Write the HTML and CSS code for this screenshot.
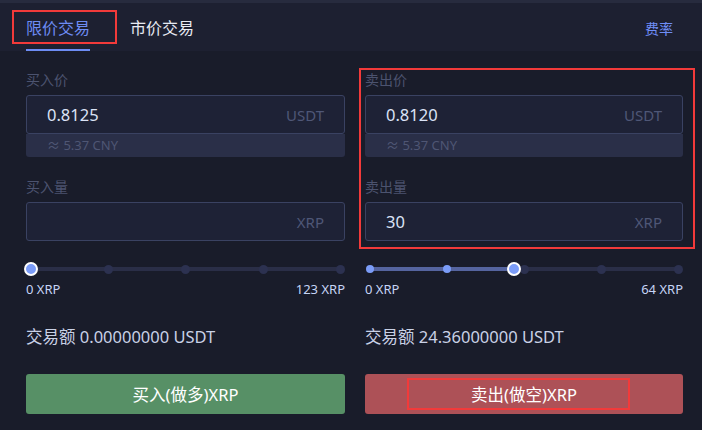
FILE: index.html
```html
<!DOCTYPE html>
<html lang="zh-CN">
<head>
<meta charset="utf-8">
<title>限价交易</title>
<link rel="stylesheet" href="styles.css">
</head>
<body>
<div class="topstrip"></div>
<header class="header">
  <nav class="tabs">
    <span class="tab active">限价交易<i class="mark mark-tab"></i></span>
    <span class="tab">市价交易</span>
  </nav>
  <a class="fee">费率</a>
</header>
<main class="panel">
  <section class="col">
    <div class="fields">
      <div class="label">买入价</div>
      <div class="input"><span class="value">0.8125</span><span class="unit">USDT</span></div>
      <div class="cny">≈ 5.37 CNY</div>
      <div class="label label2">买入量</div>
      <div class="input"><span class="value"></span><span class="unit">XRP</span></div>
    </div>
    <div class="slider" style="--p:0">
      <div class="track"></div>
      <div class="fill"></div>
      <div class="dots"><i class="dot on"></i><i class="dot"></i><i class="dot"></i><i class="dot"></i><i class="dot"></i></div>
      <div class="thumb"></div>
    </div>
    <div class="range"><span>0 XRP</span><span>123 XRP</span></div>
    <div class="total">交易额 0.00000000 USDT</div>
    <button class="btn buy">买入(做多)XRP</button>
  </section>
  <section class="col">
    <div class="fields marked">
      <div class="label">卖出价</div>
      <div class="input"><span class="value">0.8120</span><span class="unit">USDT</span></div>
      <div class="cny">≈ 5.37 CNY</div>
      <div class="label label2">卖出量</div>
      <div class="input"><span class="value">30</span><span class="unit">XRP</span></div>
      <i class="mark mark-fields"></i>
    </div>
    <div class="slider" style="--p:0.46875">
      <div class="track"></div>
      <div class="fill"></div>
      <div class="dots"><i class="dot on"></i><i class="dot on"></i><i class="dot"></i><i class="dot"></i><i class="dot"></i></div>
      <div class="thumb"></div>
    </div>
    <div class="range"><span>0 XRP</span><span>64 XRP</span></div>
    <div class="total">交易额 24.36000000 USDT</div>
    <button class="btn sell">卖出(做空)XRP<i class="mark mark-btn"></i></button>
  </section>
</main>
</body>
</html>
```
FILE: styles.css
```css
* { box-sizing: border-box; }
html, body {
  margin: 0;
  background: #191c2a;
  font-family: "Noto Sans", "Noto Sans CJK SC", sans-serif;
  color: #d9e1f4;
}
.topstrip { height: 3px; background: #272b3e; }
.header {
  height: 48px;
  background: #1d2031;
  display: flex;
  align-items: stretch;
  justify-content: space-between;
  padding: 0 29px 0 26px;
}
.tabs { display: flex; gap: 40px; }
.tab {
  position: relative;
  display: flex;
  align-items: center;
  font-size: 16px;
  color: #e8ebf3;
  border-bottom: 2px solid transparent;
  padding-top: 1px;
}
.tab.active { color: #6d8cf4; border-bottom-color: #6d8cf4; }
.fee { align-self: center; font-size: 14px; color: #6f8ef6; padding-top: 2px; }
.mark {
  position: absolute;
  border: 2px solid #f23a3a;
  pointer-events: none;
}
.mark-tab { top: 7px; bottom: 5px; left: -14px; right: -27px; }
.panel {
  display: grid;
  grid-template-columns: 319px 318px;
  column-gap: 20px;
  padding: 19px 0 0 26px;
}
.col { display: flex; flex-direction: column; }
.fields { position: relative; display: flex; flex-direction: column; }
.mark-fields { top: -2px; bottom: -8px; left: -6px; right: -12px; }
.label {
  font-size: 14px;
  line-height: 20px;
  color: #4c536f;
  margin-bottom: 5px;
}
.label2 { margin-top: 20px; }
.input {
  height: 39px;
  border: 1px solid #3a4262;
  border-radius: 3px;
  background: #1e2236;
  display: flex;
  align-items: center;
  justify-content: space-between;
  padding: 0 20px 0 20px;
}
.value { font-size: 16.5px; color: #dbe3f6; }
.unit { font-size: 15px; color: #4f5777; }
.cny {
  height: 23px;
  background: #2a2f48;
  border-radius: 0 0 3px 3px;
  font-size: 13px;
  line-height: 23px;
  padding-left: 21px;
  color: #4f5674;
}
.slider {
  position: relative;
  height: 14px;
  margin-top: 21px;
}
.track, .fill {
  position: absolute;
  top: 5px;
  height: 4px;
  left: 4.5px;
}
.track { right: 4.5px; background: #2a2e47; }
.fill { width: calc((100% - 9px) * var(--p)); background: #55649f; }
.dots {
  position: relative;
  height: 14px;
  display: flex;
  justify-content: space-between;
  align-items: center;
}
.dot {
  width: 9px; height: 9px;
  border-radius: 50%;
  background: #2c3150;
}
.dot.on { width: 8px; height: 8px; margin: 0 0.5px; background: #7b9cf8; }
.thumb {
  position: absolute;
  top: 0;
  left: calc(4.5px + (100% - 9px) * var(--p) - 7px);
  width: 14px; height: 14px;
  border-radius: 50%;
  border: 2px solid #ffffff;
  background: #7b9cf8;
}
.range {
  display: flex;
  justify-content: space-between;
  font-size: 13px;
  line-height: 18px;
  color: #c6d4f6;
  margin-top: 4px;
}
.total {
  font-size: 16.5px;
  line-height: 22px;
  color: #c9d1e6;
  margin-top: 28px;
}
.btn {
  position: relative;
  margin-top: 26px;
  height: 40px;
  border: 0;
  border-radius: 3px;
  font-family: inherit;
  font-size: 16.5px;
  color: #ffffff;
}
.buy { background: #579066; }
.sell { background: #ad5157; }
.mark-btn { top: 4px; bottom: 4px; left: 42px; right: 53px; }
```
